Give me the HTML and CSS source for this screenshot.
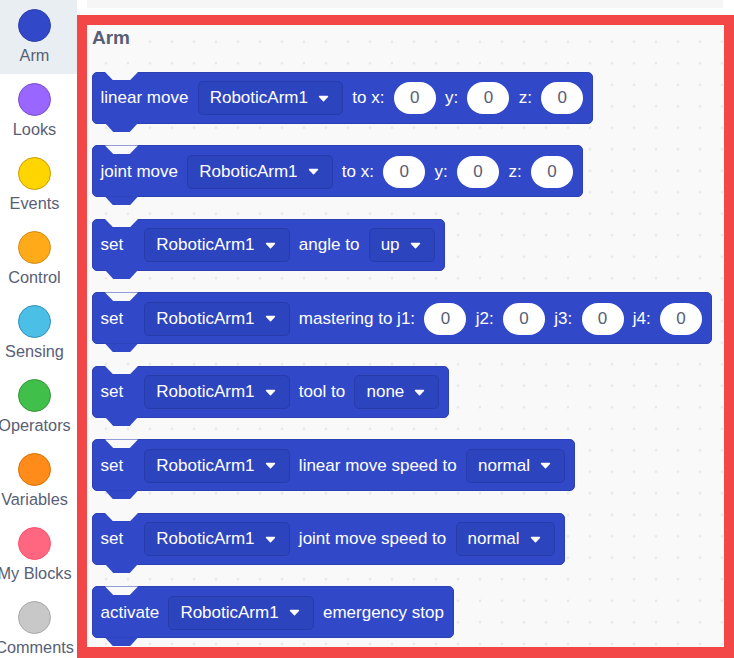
FILE: index.html
```html
<!DOCTYPE html>
<html lang="en">
<head>
<meta charset="utf-8">
<title>Arm blocks</title>
<link rel="stylesheet" href="styles.css">
</head>
<body>
<div class="page">
  <nav class="sidebar">
    <div class="cat active"><span class="dot c-arm"></span><span class="cat-label">Arm</span></div>
    <div class="cat"><span class="dot c-looks"></span><span class="cat-label">Looks</span></div>
    <div class="cat"><span class="dot c-events"></span><span class="cat-label">Events</span></div>
    <div class="cat"><span class="dot c-control"></span><span class="cat-label">Control</span></div>
    <div class="cat"><span class="dot c-sensing"></span><span class="cat-label">Sensing</span></div>
    <div class="cat"><span class="dot c-operators"></span><span class="cat-label">Operators</span></div>
    <div class="cat"><span class="dot c-variables"></span><span class="cat-label">Variables</span></div>
    <div class="cat"><span class="dot c-myblocks"></span><span class="cat-label">My Blocks</span></div>
    <div class="cat"><span class="dot c-comments"></span><span class="cat-label">Comments</span></div>
  </nav>
  <main class="main">
    <div class="topstrip"><div class="band"></div></div>
    <section class="palette">
      <h2 class="heading">Arm</h2>
      <div class="blocks">
        <div class="block">
          <span class="txt">linear move</span>
          <span class="dropdown">RoboticArm1<svg class="caret" viewBox="0 0 11 7"><path d="M1.5 1.5 H9.5 L5.5 5.7 Z"/></svg></span>
          <span class="txt">to x:</span><span class="num">0</span>
          <span class="txt">y:</span><span class="num">0</span>
          <span class="txt">z:</span><span class="num">0</span>
        </div>
        <div class="block">
          <span class="txt">joint move</span>
          <span class="dropdown">RoboticArm1<svg class="caret" viewBox="0 0 11 7"><path d="M1.5 1.5 H9.5 L5.5 5.7 Z"/></svg></span>
          <span class="txt">to x:</span><span class="num">0</span>
          <span class="txt">y:</span><span class="num">0</span>
          <span class="txt">z:</span><span class="num">0</span>
        </div>
        <div class="block">
          <span class="txt first">set</span>
          <span class="dropdown">RoboticArm1<svg class="caret" viewBox="0 0 11 7"><path d="M1.5 1.5 H9.5 L5.5 5.7 Z"/></svg></span>
          <span class="txt">angle to</span>
          <span class="dropdown">up<svg class="caret" viewBox="0 0 11 7"><path d="M1.5 1.5 H9.5 L5.5 5.7 Z"/></svg></span>
        </div>
        <div class="block">
          <span class="txt first">set</span>
          <span class="dropdown">RoboticArm1<svg class="caret" viewBox="0 0 11 7"><path d="M1.5 1.5 H9.5 L5.5 5.7 Z"/></svg></span>
          <span class="txt">mastering to j1:</span><span class="num">0</span>
          <span class="txt">j2:</span><span class="num">0</span>
          <span class="txt">j3:</span><span class="num">0</span>
          <span class="txt">j4:</span><span class="num">0</span>
        </div>
        <div class="block">
          <span class="txt first">set</span>
          <span class="dropdown">RoboticArm1<svg class="caret" viewBox="0 0 11 7"><path d="M1.5 1.5 H9.5 L5.5 5.7 Z"/></svg></span>
          <span class="txt">tool to</span>
          <span class="dropdown">none<svg class="caret" viewBox="0 0 11 7"><path d="M1.5 1.5 H9.5 L5.5 5.7 Z"/></svg></span>
        </div>
        <div class="block">
          <span class="txt first">set</span>
          <span class="dropdown">RoboticArm1<svg class="caret" viewBox="0 0 11 7"><path d="M1.5 1.5 H9.5 L5.5 5.7 Z"/></svg></span>
          <span class="txt">linear move speed to</span>
          <span class="dropdown">normal<svg class="caret" viewBox="0 0 11 7"><path d="M1.5 1.5 H9.5 L5.5 5.7 Z"/></svg></span>
        </div>
        <div class="block">
          <span class="txt first">set</span>
          <span class="dropdown">RoboticArm1<svg class="caret" viewBox="0 0 11 7"><path d="M1.5 1.5 H9.5 L5.5 5.7 Z"/></svg></span>
          <span class="txt">joint move speed to</span>
          <span class="dropdown">normal<svg class="caret" viewBox="0 0 11 7"><path d="M1.5 1.5 H9.5 L5.5 5.7 Z"/></svg></span>
        </div>
        <div class="block">
          <span class="txt">activate</span>
          <span class="dropdown">RoboticArm1<svg class="caret" viewBox="0 0 11 7"><path d="M1.5 1.5 H9.5 L5.5 5.7 Z"/></svg></span>
          <span class="txt">emergency stop</span>
        </div>
      </div>
    </section>
  </main>
</div>
</body>
</html>
```

FILE: styles.css
```css
* { box-sizing: border-box; }

html, body {
  margin: 0;
  padding: 0;
  background: #ffffff;
}

body {
  font-family: "Liberation Sans", Arial, sans-serif;
  width: 734px;
  height: 658px;
  overflow: hidden;
}

.page {
  display: flex;
  width: 734px;
  height: 658px;
  overflow: hidden;
}

/* ---------- sidebar ---------- */
.sidebar {
  width: 77px;
  flex: 0 0 77px;
  background: #ffffff;
  display: flex;
  flex-direction: column;
}

.cat {
  height: 74px;
  flex: 0 0 74px;
  padding: 8.5px 8px 0 0;
  display: flex;
  flex-direction: column;
  align-items: center;
}

.cat.active {
  background: #e9eef2;
}

.dot {
  width: 33px;
  height: 33px;
  border-radius: 50%;
  border: 1px solid;
  flex: 0 0 33px;
}

.cat-label {
  margin-top: 4.5px;
  font-size: 16.3px;
  line-height: 18px;
  color: #575e75;
  white-space: nowrap;
}

.c-arm { background: #3148c9; border-color: #2a3bab; }
.c-looks { background: #9966ff; border-color: #774dcb; }
.c-events { background: #ffd500; border-color: #cc9900; }
.c-control { background: #ffab19; border-color: #cf8b17; }
.c-sensing { background: #4cbfe6; border-color: #2e8eb8; }
.c-operators { background: #40bf4a; border-color: #389438; }
.c-variables { background: #ff8c1a; border-color: #db6e00; }
.c-myblocks { background: #ff6680; border-color: #ff4d6a; }
.c-comments { background: #c8c8c8; border-color: #a8a8a8; }

/* ---------- main ---------- */
.main {
  flex: 1 1 auto;
  display: flex;
  flex-direction: column;
  min-width: 0;
}

.topstrip {
  height: 15px;
  flex: 0 0 15px;
  padding-left: 10px;
}

.band {
  width: 636px;
  height: 8px;
  background: #f6f6f6;
}

.palette {
  flex: 1 1 auto;
  border: 10px solid #f34747;
  border-bottom-width: 11px;
  background-color: #f9f9f9;
  background-image: radial-gradient(circle, #e8e8e8 1.1px, rgba(249,249,249,0) 1.7px);
  background-size: 22px 21.5px;
  background-position: 8px 6px;
  padding: 2.2px 0 0 5px;
  overflow: hidden;
}

.heading {
  margin: 0 0 22.8px 0;
  font-size: 19px;
  line-height: 22px;
  font-weight: bold;
  color: #575e75;
}

.blocks {
  display: flex;
  flex-direction: column;
  align-items: flex-start;
  gap: 21.5px;
}

/* ---------- blocks ---------- */
.block {
  position: relative;
  height: 52px;
  display: flex;
  align-items: center;
  gap: 9.3px;
  padding: 1px 9px 0 7.5px;
  background: #3149c9;
  border: 1px solid #2b40b3;
  border-radius: 5px;
  color: #ffffff;
  font-size: 17px;
  white-space: nowrap;
}

/* notch cut into the top edge */
.block::before {
  content: "";
  position: absolute;
  top: -1px;
  left: 12px;
  width: 33px;
  height: 8.5px;
  background: #f9f9f9;
  clip-path: polygon(0 0, 100% 0, 75% 100%, 25% 100%);
}

/* tab under the bottom edge */
.block::after {
  content: "";
  position: absolute;
  top: 100%;
  left: 12px;
  width: 33px;
  height: 9px;
  background: #3149c9;
  clip-path: polygon(0 0, 100% 0, 75% 100%, 25% 100%);
}

.txt {
  line-height: 20px;
}

.txt.first {
  min-width: 34.5px;
}

.dropdown {
  height: 34px;
  display: flex;
  align-items: center;
  gap: 10px;
  padding: 0 13px 0 11px;
  background: #2d44bf;
  border: 1px solid #283bab;
  border-radius: 5px;
  line-height: 20px;
}

.caret {
  width: 11px;
  height: 7px;
  display: block;
}

.caret path {
  fill: #ffffff;
  stroke: #ffffff;
  stroke-width: 1.4;
  stroke-linejoin: round;
}

.num {
  width: 42px;
  height: 32px;
  border-radius: 16px;
  background: #ffffff;
  color: #575e75;
  display: flex;
  align-items: center;
  justify-content: center;
  line-height: 20px;
}
```
